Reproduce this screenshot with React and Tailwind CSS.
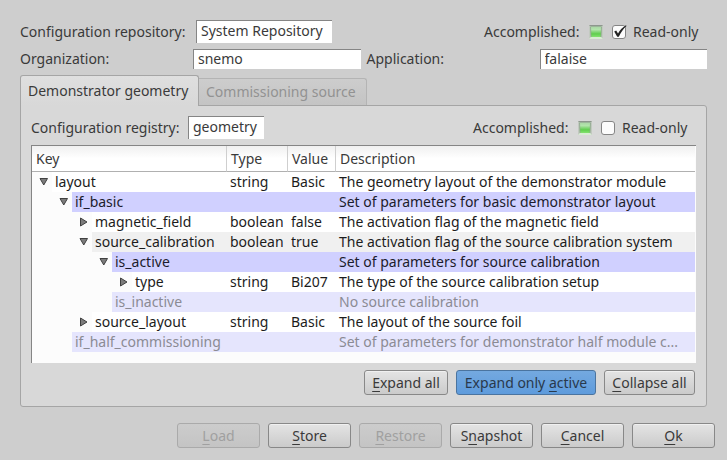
const rows = [
  { level: 0, arrow: 'down', name: 'layout', type: 'string', value: 'Basic', text: 'The geometry layout of the demonstrator module' },
  { level: 1, arrow: 'down', name: 'if_basic', text: 'Set of parameters for basic demonstrator layout', tone: 'group' },
  { level: 2, arrow: 'right', name: 'magnetic_field', type: 'boolean', value: 'false', text: 'The activation flag of the magnetic field' },
  { level: 2, arrow: 'down', name: 'source_calibration', type: 'boolean', value: 'true', text: 'The activation flag of the source calibration system', tone: 'hover' },
  { level: 3, arrow: 'down', name: 'is_active', text: 'Set of parameters for source calibration', tone: 'group' },
  { level: 4, arrow: 'right', name: 'type', type: 'string', value: 'Bi207', text: 'The type of the source calibration setup' },
  { level: 3, name: 'is_inactive', text: 'No source calibration', tone: 'off' },
  { level: 2, arrow: 'right', name: 'source_layout', type: 'string', value: 'Basic', text: 'The layout of the source foil' },
  { level: 1, name: 'if_half_commissioning', text: 'Set of parameters for demonstrator half module c...', tone: 'off' },
];

const indents = ['pl-0', 'pl-5', 'pl-10', 'pl-[60px]', 'pl-20'];

const tones = {
  plain: 'bg-white text-[#1c1c1c]',
  hover: 'bg-[#f0f0f0] text-[#1c1c1c]',
  group: 'bg-[#d0d0ff] text-[#1c1c2c]',
  off: 'bg-[#e5e5fd] text-[#8b8b94]',
};

const field =
  'border-t border-l border-[#858585] bg-white px-1 text-[#3a3a3a] outline-none';

function Arrow({ direction }) {
  return (
    <svg viewBox="0 0 10 10" className="h-[10px] w-[10px]" aria-hidden="true">
      <path
        d={direction === 'down' ? 'M1 1.5H8.5L4.75 8Z' : 'M1.5 1V9L8 5Z'}
        fill="#7c7c7c"
        stroke="#404040"
        strokeWidth="1"
      />
    </svg>
  );
}

function Led({ id }) {
  return (
    <svg viewBox="0 0 14 14" className="h-[14px] w-[14px]" role="img" aria-label="Yes">
      <defs>
        <linearGradient id={id} x1="0" y1="0" x2="0" y2="1">
          <stop offset="0" stopColor="#a9d6a5" />
          <stop offset="0.3" stopColor="#b2e5ab" />
          <stop offset="0.5" stopColor="#86d87a" />
          <stop offset="0.7" stopColor="#5fce4d" />
          <stop offset="1" stopColor="#84e36f" />
        </linearGradient>
      </defs>
      <rect width="14" height="14" fill="#c2cac0" />
      <path d="M0 0H14L12 2H2Z" fill="#8d968d" />
      <path d="M0 14L2 12H12L14 14Z" fill="#d8ecd3" />
      <path d="M1.5 1.5H12.5L12 12H2Z" fill={`url(#${id})`} />
      <path d="M1.5 2L2 12M12.5 2L12 12" stroke="#8ea38b" strokeWidth="0.8" />
    </svg>
  );
}

function Status({ id, checked }) {
  return (
    <div className="flex items-center">
      <span className="mr-2 w-[97px]">Accomplished:</span>
      <Led id={`${id}-led`} />
      <span className="relative ml-[9px] flex h-[14px] w-[14px]">
        <input
          id={id}
          type="checkbox"
          defaultChecked={checked}
          className="peer h-[14px] w-[14px] appearance-none rounded-[3px] border border-[#858585] bg-[#fcfcfc]"
        />
        <svg viewBox="0 0 14 14" className="pointer-events-none absolute inset-0 hidden h-[14px] w-[14px] overflow-visible peer-checked:block" aria-hidden="true">
          <path d="M2.2 6.6L4.2 5.6L6 8.6C8 5 10.5 2.3 14 0.3L14.5 1C11.2 4 8.8 7.5 6.8 11.8H5.2Z" fill="#242424" />
        </svg>
      </span>
      <label htmlFor={id} className="ml-[7px] w-[67px]">Read-only</label>
    </div>
  );
}

function Button({ before = '', mnemonic, after, tone = 'normal', width = 'w-[83px]' }) {
  const looks = {
    normal: 'border-[#888888] bg-linear-to-b from-[#e4e4e4] to-[#cbcbcb] text-[#3a3a3a] shadow-[inset_0_1px_0_#f0f0f0]',
    active: 'border-[#4a74a0] bg-linear-to-b from-[#74a9e0] to-[#5e9bdc] text-[#29394c]',
    disabled: 'border-[#aaaaaa] bg-linear-to-b from-[#cccccc] to-[#c4c4c4] text-[#a0a0a0]',
  };
  return (
    <button
      type="button"
      disabled={tone === 'disabled'}
      className={`flex h-[25px] items-center justify-center rounded-[3px] border whitespace-pre ${width} ${looks[tone]}`}
    >
      {before}
      <span className="underline underline-offset-3">{mnemonic}</span>
      {after}
    </button>
  );
}

export default function App() {
  return (
    <main className="min-h-screen bg-[#cecece] pt-5 font-['Noto_Sans',sans-serif] text-[14px] leading-5 text-[#3a3a3a]">
      <div className="px-5">
        <div className="flex items-center justify-between">
          <div className="flex items-center gap-2">
            <label htmlFor="repository" className="w-[168px]">Configuration repository:</label>
            <input id="repository" readOnly defaultValue="System Repository" className={`${field} h-[23px] w-[136px] pb-1`} />
          </div>
          <div className="pr-[7px]">
            <Status id="repository-lock" checked />
          </div>
        </div>
        <div className="mt-[6px] grid grid-cols-2 gap-[6px]">
          <div className="flex items-center">
            <label htmlFor="organization" className="w-[173px]">Organization:</label>
            <input id="organization" readOnly defaultValue="snemo" className={`${field} h-5 min-w-0 flex-1 pb-0.5`} />
          </div>
          <div className="flex items-center">
            <label htmlFor="application" className="w-[173px]">Application:</label>
            <input id="application" readOnly defaultValue="falaise" className={`${field} h-5 min-w-0 flex-1 pb-0.5`} />
          </div>
        </div>

        <div role="tablist" className="mt-[6px] flex items-end">
          <button type="button" role="tab" aria-selected="true" className="z-10 -mb-px h-[31px] w-[179px] rounded-t-[3px] border border-b-0 border-[#a5a5a5] bg-linear-to-b from-[#dfdfdf] to-[#d8d8d8] pl-[7px] text-left whitespace-nowrap">
            Demonstrator geometry
          </button>
          <button type="button" role="tab" aria-selected="false" className="h-[27px] w-[168px] rounded-tr-[3px] border border-b-0 border-l-0 border-[#b4b4b4] bg-linear-to-b from-[#cdcdcd] to-[#c4c4c4] pl-[7px] text-left whitespace-nowrap text-[#929292]">
            Commissioning source
          </button>
        </div>
        <section role="tabpanel" className="rounded-b-[3px] rounded-tr-[3px] border border-[#a5a5a5] bg-[#d8d8d8] p-[10px] pb-[11px]">
          <div className="flex items-center justify-between">
            <div className="flex items-center gap-[7px]">
              <label htmlFor="registry" className="w-[150px]">Configuration registry:</label>
              <input id="registry" readOnly defaultValue="geometry" className={`${field} h-[23px] w-[76px] pb-1`} />
            </div>
            <div className="pr-[7px]">
              <Status id="registry-lock" checked={false} />
            </div>
          </div>

          <div className="mt-[6px] h-[218px] border-t border-l border-[#858585] bg-[#fcfcfc] pr-px">
            <table className="w-full table-fixed border-separate border-spacing-0 text-left">
              <colgroup>
                <col className="w-[195px]" />
                <col className="w-[61px]" />
                <col className="w-[48px]" />
                <col />
              </colgroup>
              <thead>
                <tr>
                  {['Key', 'Type', 'Value', 'Description'].map((title) => (
                    <th key={title} className="h-[26px] border-r border-b border-r-[#cfcfcf] border-b-[#b0b0b0] bg-linear-to-b from-[#f0f0f0] to-white to-50% px-1 py-0 font-normal last:border-r-0">
                      {title}
                    </th>
                  ))}
                </tr>
              </thead>
              <tbody>
                {rows.map((row) => {
                  const tone = tones[row.tone ?? 'plain'];
                  return (
                    <tr key={row.name} className="h-5">
                      <td className="p-0">
                        <div className={`flex ${indents[row.level]}`}>
                          <span className="flex w-5 shrink-0 items-center justify-center pl-1">
                            {row.arrow && (
                              <button type="button" aria-label={`Toggle ${row.name}`}>
                                <Arrow direction={row.arrow} />
                              </button>
                            )}
                          </span>
                          <span className={`flex-1 pl-[3px] whitespace-nowrap ${tone}`}>{row.name}</span>
                        </div>
                      </td>
                      <td className={`p-0 pl-[3px] ${tone}`}>{row.type}</td>
                      <td className={`p-0 pl-[3px] ${tone}`}>{row.value}</td>
                      <td className={`truncate p-0 pl-[3px] ${tone}`}>{row.text}</td>
                    </tr>
                  );
                })}
              </tbody>
            </table>
          </div>

          <div className="mt-[7px] flex justify-end gap-2 pr-px">
            <Button mnemonic="E" after="xpand all" width="w-[84px]" />
            <Button before="Expand only " mnemonic="a" after="ctive" tone="active" width="w-[140px]" />
            <Button mnemonic="C" after="ollapse all" width="w-[91px]" />
          </div>
        </section>
      </div>

      <div className="mt-4 flex justify-end gap-2 pr-3">
        <Button mnemonic="L" after="oad" tone="disabled" />
        <Button mnemonic="S" after="tore" />
        <Button mnemonic="R" after="estore" tone="disabled" />
        <Button before="S" mnemonic="n" after="apshot" />
        <Button mnemonic="C" after="ancel" />
        <Button mnemonic="O" after="k" />
      </div>
    </main>
  );
}
